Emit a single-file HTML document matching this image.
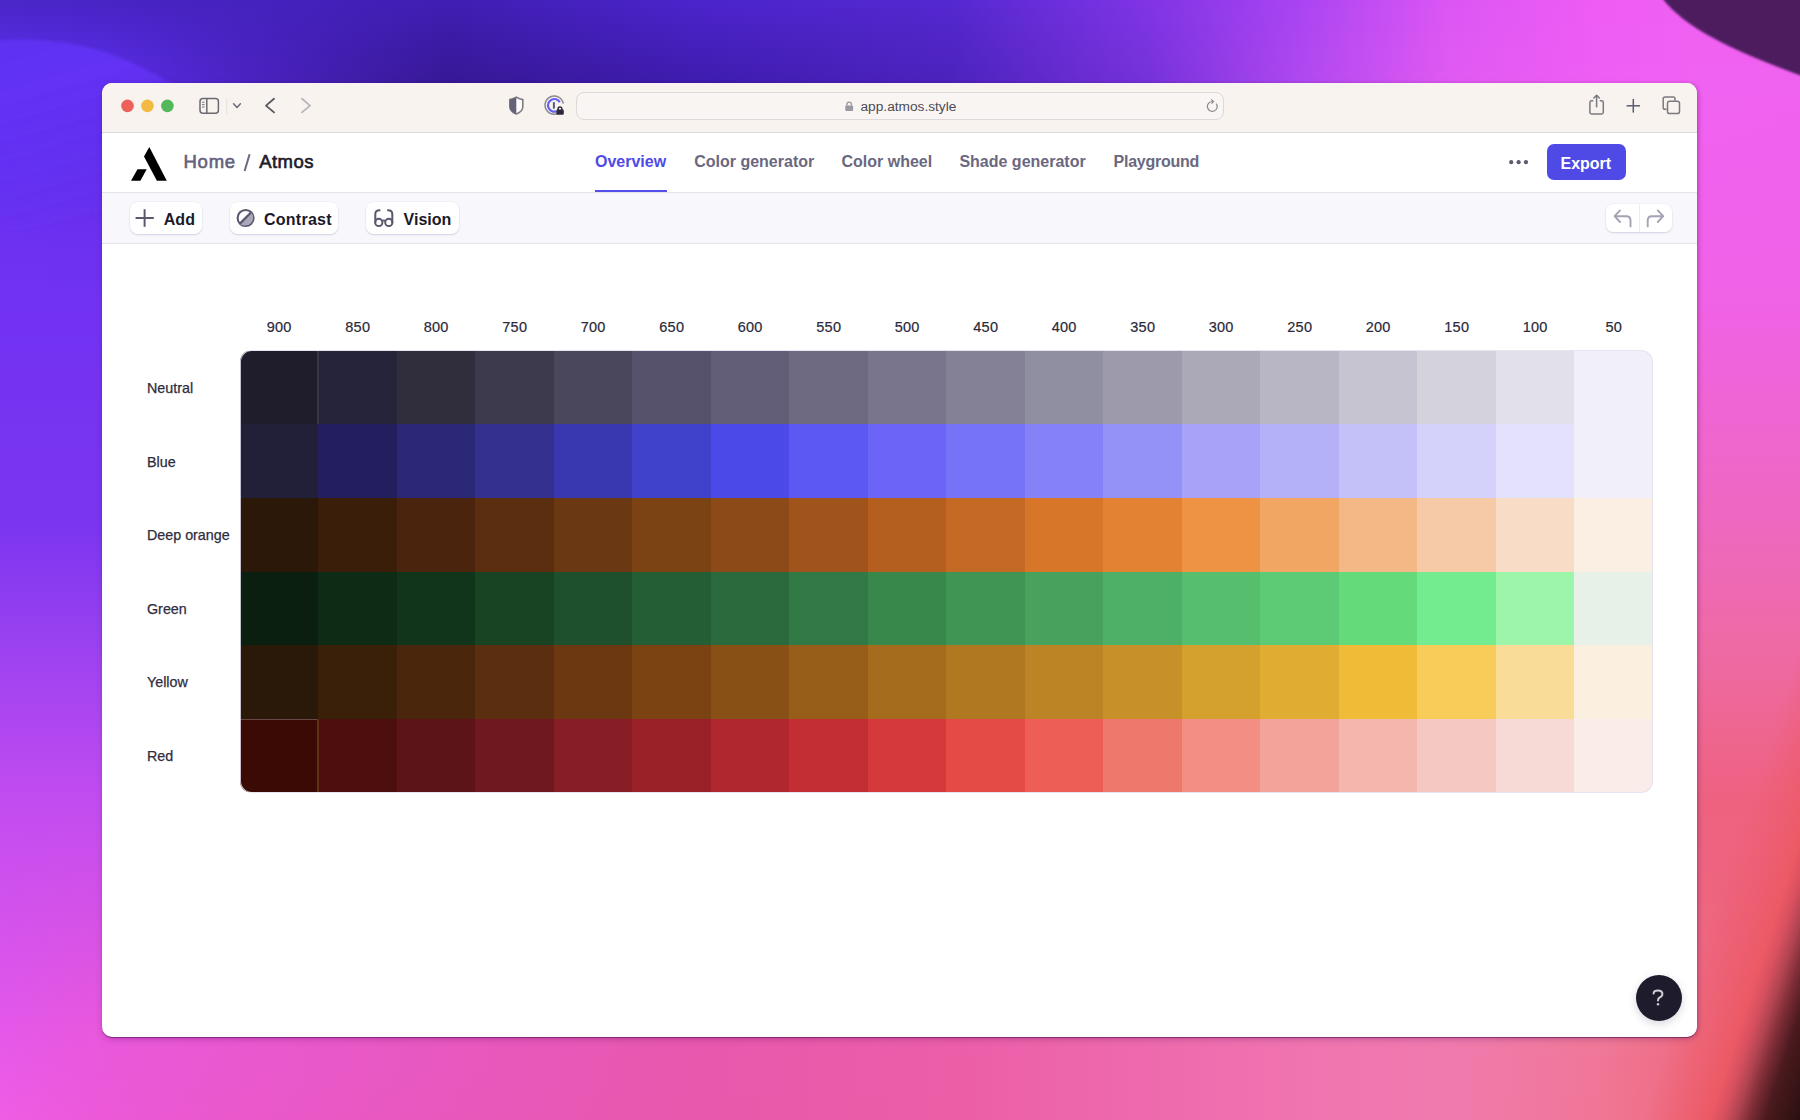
<!DOCTYPE html>
<html><head><meta charset="utf-8">
<style>
*{box-sizing:border-box;margin:0;padding:0}
html,body{width:1800px;height:1120px;overflow:hidden}
body{position:relative;font-family:"Liberation Sans",sans-serif;background:#b048f0}
.bg{position:absolute}
.win{position:absolute;left:102px;top:83px;width:1595px;height:954px;border-radius:10px;background:#fff;
 box-shadow:0 1px 0 rgba(80,10,80,.5),0 3px 7px -1px rgba(60,0,80,.25),2px 0 4px -1px rgba(90,0,90,.28)}
.winclip{position:absolute;left:102px;top:83px;width:1595px;height:954px;border-radius:10px;overflow:hidden}
.tb{position:absolute;left:0;top:0;width:1596px;height:50px;background:#f8f3ef;border-bottom:1px solid #d9d6d8}
.hd{position:absolute;left:0;top:50px;width:1596px;height:60px;background:#fff;border-bottom:1px solid #e3e3ed}
.tl{position:absolute;left:0;top:110px;width:1596px;height:51px;background:#f7f7fc;border-bottom:1px solid #e3e3ed}
.t{position:absolute;white-space:nowrap}
svg{position:absolute;overflow:visible}
.url{position:absolute;left:576px;top:92px;width:648px;height:28px;border:1px solid #dcd8dc;border-radius:8px;background:#f9f5f2}
.nav{position:absolute;top:154px;font-size:16px;line-height:16px;font-weight:700;color:#6a6880;white-space:nowrap}
.btn{position:absolute;background:#fff;border-radius:8px;box-shadow:0 0 0 0.5px rgba(225,225,240,.45),0 1px 1.5px rgba(195,195,222,.75)}
.btxt{position:absolute;font-size:16px;line-height:16px;font-weight:700;color:#1b1a29;white-space:nowrap}
.grid{position:absolute;left:240px;top:350px;width:1413px;height:443px;border-radius:12px;overflow:hidden;background:#fff}
.ring{position:absolute;left:240px;top:350px;width:1413px;height:443px;border-radius:12px;box-shadow:inset 0 0 0 1px rgba(226,224,238,.85)}
.c{position:absolute}
.cl{position:absolute;top:320px;width:80px;text-align:center;font-size:14.5px;line-height:14.5px;letter-spacing:.3px;color:#2b2a3a;-webkit-text-stroke:0.2px #2b2a3a}
.rl{position:absolute;left:147px;font-size:14.3px;line-height:14.3px;color:#2e2c3e;-webkit-text-stroke:0.25px #2e2c3e;white-space:nowrap}
</style></head>
<body>
<div id="bgwrap" style="position:absolute;left:0;top:0;width:1800px;height:1120px;overflow:hidden">
<div style="position:absolute;left:0;top:0px;width:1800px;height:8px;background:linear-gradient(90deg,#4b26ca 0px,#4924c6 100px,#4522be 250px,#3f1eb2 450px,#4b24cb 700px,#5428cf 950px,#8034e5 1150px,#aa44f2 1300px,#dc56f4 1450px,#ee5cf4 1600px,#f060f2 1700px,#f060f2 1800px)"></div>
<div style="position:absolute;left:0;top:8px;width:1800px;height:8px;background:linear-gradient(90deg,#4d27ce 0px,#4b25c9 100px,#4622be 250px,#3e1daf 450px,#4a23c8 700px,#5327cd 950px,#7f34e4 1150px,#ab45f2 1300px,#dd57f4 1450px,#ee5cf4 1600px,#f060f2 1700px,#f060f2 1800px)"></div>
<div style="position:absolute;left:0;top:16px;width:1800px;height:8px;background:linear-gradient(90deg,#4f28d2 0px,#4c26cd 100px,#4622be 250px,#3d1dac 450px,#4922c5 700px,#5227cb 950px,#7e34e3 1150px,#ab45f2 1300px,#dd57f4 1450px,#ee5cf4 1600px,#f060f2 1700px,#f060f2 1800px)"></div>
<div style="position:absolute;left:0;top:24px;width:1800px;height:8px;background:linear-gradient(90deg,#5129d5 0px,#4e27d0 100px,#4722bf 250px,#3c1ca9 450px,#4721c2 700px,#5126c9 950px,#7d33e2 1150px,#ac45f1 1300px,#dd57f3 1450px,#ee5df4 1600px,#f061f2 1700px,#f061f1 1800px)"></div>
<div style="position:absolute;left:0;top:32px;width:1800px;height:8px;background:linear-gradient(90deg,#532ad9 0px,#5028d4 100px,#4722bf 250px,#3b1ba6 450px,#4621bf 700px,#5125c7 950px,#7c33e1 1150px,#ad46f1 1300px,#de58f3 1450px,#ee5df4 1600px,#f061f2 1700px,#f061f1 1800px)"></div>
<div style="position:absolute;left:0;top:40px;width:1800px;height:8px;background:linear-gradient(90deg,#552bdd 0px,#5229d7 100px,#4822bf 250px,#3a1ba3 450px,#4520bc 700px,#5025c5 950px,#7b33e0 1150px,#ad46f1 1300px,#de58f3 1450px,#ee5df4 1600px,#f061f2 1700px,#f061f1 1800px)"></div>
<div style="position:absolute;left:0;top:48px;width:1800px;height:8px;background:linear-gradient(90deg,#572ce1 0px,#532adb 100px,#4822bf 250px,#391aa0 450px,#431fb9 700px,#4f24c3 950px,#7a33de 1150px,#ae47f1 1300px,#df59f3 1450px,#ee5df4 1600px,#f061f2 1700px,#f061f1 1800px)"></div>
<div style="position:absolute;left:0;top:56px;width:1800px;height:8px;background:linear-gradient(90deg,#582de5 0px,#552bde 100px,#4922bf 250px,#381a9d 450px,#421eb6 700px,#4e24c2 950px,#7933dd 1150px,#ae47f1 1300px,#df59f3 1450px,#ee5df4 1600px,#f061f2 1700px,#f061f1 1800px)"></div>
<div style="position:absolute;left:0;top:64px;width:1800px;height:8px;background:linear-gradient(90deg,#5a2de9 0px,#572be1 100px,#4922c0 250px,#38199a 450px,#411db3 700px,#4d23c0 950px,#7832dc 1150px,#af47f0 1300px,#df59f2 1450px,#ee5ef4 1600px,#f062f2 1700px,#f062f0 1800px)"></div>
<div style="position:absolute;left:0;top:72px;width:1800px;height:8px;background:linear-gradient(90deg,#5c2eed 0px,#582ce5 100px,#4a22c0 250px,#371997 450px,#3f1db1 700px,#4d23be 950px,#7732db 1150px,#af48f0 1300px,#e05af2 1450px,#ee5ef4 1600px,#f062f2 1700px,#f062f0 1800px)"></div>
<div style="position:absolute;left:0;top:80px;width:1800px;height:8px;background:linear-gradient(90deg,#5e2ff0 0px,#5a2de8 100px,#4a22c0 250px,#361894 450px,#3e1cae 700px,#4c22bc 950px,#7632da 1150px,#b048f0 1300px,#e05af2 1450px,#ee5ef4 1600px,#f062f2 1700px,#f062f0 1800px)"></div>
<div style="position:absolute;left:0;top:88px;width:1800px;height:8px;background:linear-gradient(90deg,#5f2ff0 0px,#5b2de8 100px,#4c23c2 250px,#3a1a98 450px,#421eb1 700px,#5024be 950px,#7933db 1150px,#b149f0 1300px,#e05af2 1450px,#ee5ef3 1600px,#f062f2 1700px,#f062f0 1800px)"></div>
<div style="position:absolute;left:0;top:96px;width:1800px;height:8px;background:linear-gradient(90deg,#602ff0 0px,#5c2de9 100px,#4e24c4 250px,#3d1b9b 450px,#461fb3 700px,#5425c0 950px,#7c34db 1150px,#b349ef 1300px,#e05af1 1450px,#ee5ef3 1600px,#f062f1 1700px,#f062ef 1800px)"></div>
<div style="position:absolute;left:0;top:104px;width:1800px;height:8px;background:linear-gradient(90deg,#602ff0 0px,#5d2ee9 100px,#5024c6 250px,#401c9f 450px,#4921b5 700px,#5827c1 950px,#7f36dc 1150px,#b44aef 1300px,#e05af1 1450px,#ed5ef2 1600px,#f062f1 1700px,#f062ef 1800px)"></div>
<div style="position:absolute;left:0;top:112px;width:1800px;height:8px;background:linear-gradient(90deg,#612ff0 0px,#5e2eea 100px,#5225c7 250px,#431ea2 450px,#4d22b8 700px,#5c28c3 950px,#8237dc 1150px,#b54aef 1300px,#e05af0 1450px,#ed5ef2 1600px,#f062f0 1700px,#f062ee 1800px)"></div>
<div style="position:absolute;left:0;top:120px;width:1800px;height:8px;background:linear-gradient(90deg,#6230f0 0px,#5f2eea 100px,#5426c9 250px,#461fa5 450px,#5124ba 700px,#602ac5 950px,#8538dd 1150px,#b64bef 1300px,#df5af0 1450px,#ed5ef1 1600px,#f062f0 1700px,#f062ee 1800px)"></div>
<div style="position:absolute;left:0;top:128px;width:1800px;height:8px;background:linear-gradient(90deg,#6330f0 0px,#5f2eea 100px,#5627cb 250px,#4a20a9 450px,#5425bc 700px,#642bc7 950px,#8839de 1150px,#b74bee 1300px,#df5af0 1450px,#ed5ef1 1600px,#f062ef 1700px,#f062ee 1800px)"></div>
<div style="position:absolute;left:0;top:136px;width:1800px;height:8px;background:linear-gradient(90deg,#6330f1 0px,#602eeb 100px,#5727cd 250px,#4d22ac 450px,#5826bf 700px,#682dc9 950px,#8b3ade 1150px,#b94cee 1300px,#df5aef 1450px,#ed5ef1 1600px,#f062ef 1700px,#f062ed 1800px)"></div>
<div style="position:absolute;left:0;top:144px;width:1800px;height:8px;background:linear-gradient(90deg,#6430f1 0px,#612eeb 100px,#5928cf 250px,#5023af 450px,#5c28c1 700px,#6b2eca 950px,#8e3bdf 1150px,#ba4cee 1300px,#df5aef 1450px,#ec5ef0 1600px,#f062ee 1700px,#f062ed 1800px)"></div>
<div style="position:absolute;left:0;top:152px;width:1800px;height:8px;background:linear-gradient(90deg,#6530f1 0px,#622feb 100px,#5b29d0 250px,#5324b3 450px,#5f29c3 700px,#6f30cc 950px,#913ddf 1150px,#bb4dee 1300px,#df5aef 1450px,#ec5ef0 1600px,#f062ee 1700px,#f062ed 1800px)"></div>
<div style="position:absolute;left:0;top:160px;width:1800px;height:8px;background:linear-gradient(90deg,#6530f1 0px,#632fec 100px,#5d2ad2 250px,#5726b6 450px,#632bc6 700px,#7331ce 950px,#933ee0 1150px,#bc4ded 1300px,#df5aee 1450px,#ec5eef 1600px,#f062ee 1700px,#f062ec 1800px)"></div>
<div style="position:absolute;left:0;top:168px;width:1800px;height:8px;background:linear-gradient(90deg,#6630f1 0px,#642fec 100px,#5f2ad4 250px,#5a27b9 450px,#672cc8 700px,#7733d0 950px,#963fe1 1150px,#bd4eed 1300px,#df5aee 1450px,#ec5fef 1600px,#f062ed 1700px,#f062ec 1800px)"></div>
<div style="position:absolute;left:0;top:176px;width:1800px;height:8px;background:linear-gradient(90deg,#6730f1 0px,#652fec 100px,#612bd6 250px,#5d28bd 450px,#6a2eca 700px,#7b35d1 950px,#9940e1 1150px,#bf4eed 1300px,#df5aed 1450px,#ec5fee 1600px,#f062ed 1700px,#f062ec 1800px)"></div>
<div style="position:absolute;left:0;top:184px;width:1800px;height:8px;background:linear-gradient(90deg,#6830f1 0px,#662fed 100px,#632cd8 250px,#602ac0 450px,#6e2fcd 700px,#7f36d3 950px,#9c41e2 1150px,#c04fed 1300px,#de5aed 1450px,#eb5fee 1600px,#f062ec 1700px,#f062eb 1800px)"></div>
<div style="position:absolute;left:0;top:192px;width:1800px;height:8px;background:linear-gradient(90deg,#6831f1 0px,#6630ed 100px,#652dd9 250px,#632bc4 450px,#7231cf 700px,#8338d5 950px,#9f42e2 1150px,#c14fec 1300px,#de5aed 1450px,#eb5fed 1600px,#f062ec 1700px,#f062eb 1800px)"></div>
<div style="position:absolute;left:0;top:200px;width:1800px;height:8px;background:linear-gradient(90deg,#6931f1 0px,#6730ee 100px,#672ddb 250px,#672cc7 450px,#7532d1 700px,#8739d7 950px,#a244e3 1150px,#c250ec 1300px,#de5aec 1450px,#eb5fed 1600px,#f062eb 1700px,#f062ea 1800px)"></div>
<div style="position:absolute;left:0;top:208px;width:1800px;height:8px;background:linear-gradient(90deg,#6a31f1 0px,#6830ee 100px,#682edd 250px,#6a2eca 450px,#7934d4 700px,#8a3bd8 950px,#a545e4 1150px,#c450ec 1300px,#de5aec 1450px,#eb5fec 1600px,#f062eb 1700px,#f062ea 1800px)"></div>
<div style="position:absolute;left:0;top:216px;width:1800px;height:8px;background:linear-gradient(90deg,#6b31f1 0px,#6930ee 100px,#6a2fdf 250px,#6d2fce 450px,#7d35d6 700px,#8e3cda 950px,#a846e4 1150px,#c551ec 1300px,#de5aec 1450px,#eb5fec 1600px,#f062ea 1700px,#f062ea 1800px)"></div>
<div style="position:absolute;left:0;top:224px;width:1800px;height:8px;background:linear-gradient(90deg,#6b31f1 0px,#6a30ef 100px,#6c30e1 250px,#7030d1 450px,#8037d8 700px,#923edc 950px,#ab47e5 1150px,#c651eb 1300px,#de5aeb 1450px,#eb5feb 1600px,#f062ea 1700px,#f062e9 1800px)"></div>
<div style="position:absolute;left:0;top:232px;width:1800px;height:8px;background:linear-gradient(90deg,#6c31f1 0px,#6b31ef 100px,#6e30e3 250px,#7332d4 450px,#8438db 700px,#963fde 950px,#ae48e5 1150px,#c752eb 1300px,#de5aeb 1450px,#ea5feb 1600px,#f062ea 1700px,#f062e9 1800px)"></div>
<div style="position:absolute;left:0;top:240px;width:1800px;height:8px;background:linear-gradient(90deg,#6d31f1 0px,#6c31ef 100px,#7031e4 250px,#7733d8 450px,#873add 700px,#9a41df 950px,#b149e6 1150px,#c852eb 1300px,#de5bea 1450px,#ea5fea 1600px,#f062e9 1700px,#f062e9 1800px)"></div>
<div style="position:absolute;left:0;top:248px;width:1800px;height:8px;background:linear-gradient(90deg,#6e31f2 0px,#6d31f0 100px,#7232e6 250px,#7a34db 450px,#8b3bdf 700px,#9e42e1 950px,#b34be7 1150px,#ca53eb 1300px,#de5bea 1450px,#ea5fea 1600px,#f062e9 1700px,#f062e8 1800px)"></div>
<div style="position:absolute;left:0;top:256px;width:1800px;height:8px;background:linear-gradient(90deg,#6e31f2 0px,#6e31f0 100px,#7433e8 250px,#7d36df 450px,#8f3de2 700px,#a244e3 950px,#b64ce7 1150px,#cb54ea 1300px,#dd5bea 1450px,#ea5fe9 1600px,#f062e8 1700px,#f062e8 1800px)"></div>
<div style="position:absolute;left:0;top:264px;width:1800px;height:8px;background:linear-gradient(90deg,#6f32f2 0px,#6e31f1 100px,#7633ea 250px,#8037e2 450px,#923ee4 700px,#a645e5 950px,#b94de8 1150px,#cc54ea 1300px,#dd5be9 1450px,#ea5fe9 1600px,#f062e8 1700px,#f062e7 1800px)"></div>
<div style="position:absolute;left:0;top:272px;width:1800px;height:8px;background:linear-gradient(90deg,#7032f2 0px,#6f31f1 100px,#7834ec 250px,#8338e5 450px,#9640e6 700px,#a947e6 950px,#bc4ee8 1150px,#cd55ea 1300px,#dd5be9 1450px,#e95fe8 1600px,#f062e7 1700px,#f062e7 1800px)"></div>
<div style="position:absolute;left:0;top:280px;width:1800px;height:8px;background:linear-gradient(90deg,#7132f2 0px,#7032f1 100px,#7935ed 250px,#873ae9 450px,#9a41e9 700px,#ad48e8 950px,#bf4fe9 1150px,#ce55e9 1300px,#dd5be9 1450px,#e95fe8 1600px,#f062e7 1700px,#f062e7 1800px)"></div>
<div style="position:absolute;left:0;top:288px;width:1800px;height:8px;background:linear-gradient(90deg,#7132f2 0px,#7132f2 100px,#7b36ef 250px,#8a3bec 450px,#9d42eb 700px,#b14aea 950px,#c250ea 1150px,#d056e9 1300px,#dd5be8 1450px,#e95fe7 1600px,#f062e6 1700px,#f062e6 1800px)"></div>
<div style="position:absolute;left:0;top:296px;width:1800px;height:8px;background:linear-gradient(90deg,#7232f2 0px,#7232f2 100px,#7d36f1 250px,#8d3cef 450px,#a144ee 700px,#b54cec 950px,#c552ea 1150px,#d156e9 1300px,#dd5be8 1450px,#e95fe7 1600px,#f062e6 1700px,#f062e6 1800px)"></div>
<div style="position:absolute;left:0;top:304px;width:1800px;height:8px;background:linear-gradient(90deg,#7232f2 0px,#7232f2 100px,#7d36f1 250px,#8d3cef 450px,#a144ed 700px,#b54ceb 950px,#c552e9 1150px,#d156e8 1300px,#dd5be7 1450px,#e95fe5 1600px,#f062e5 1700px,#f062e5 1800px)"></div>
<div style="position:absolute;left:0;top:312px;width:1800px;height:8px;background:linear-gradient(90deg,#7332f2 0px,#7332f2 100px,#7e36f1 250px,#8e3def 450px,#a144ec 700px,#b54cea 950px,#c552e8 1150px,#d157e7 1300px,#dd5be5 1450px,#e960e4 1600px,#f062e3 1700px,#f062e3 1800px)"></div>
<div style="position:absolute;left:0;top:320px;width:1800px;height:8px;background:linear-gradient(90deg,#7332f2 0px,#7332f2 100px,#7e37f0 250px,#8e3dee 450px,#a244ec 700px,#b54ce9 950px,#c552e7 1150px,#d157e6 1300px,#dd5be4 1450px,#e960e3 1600px,#f063e2 1700px,#f063e2 1800px)"></div>
<div style="position:absolute;left:0;top:328px;width:1800px;height:8px;background:linear-gradient(90deg,#7332f2 0px,#7332f2 100px,#7e37f0 250px,#8e3dee 450px,#a245eb 700px,#b54ce9 950px,#c552e6 1150px,#d157e5 1300px,#dd5ce3 1450px,#e960e1 1600px,#f063e0 1700px,#f063e0 1800px)"></div>
<div style="position:absolute;left:0;top:336px;width:1800px;height:8px;background:linear-gradient(90deg,#7333f2 0px,#7333f2 100px,#7e37f0 250px,#8e3dee 450px,#a245eb 700px,#b54ce8 950px,#c552e5 1150px,#d157e4 1300px,#dd5ce2 1450px,#e960e0 1600px,#f063df 1700px,#f063df 1800px)"></div>
<div style="position:absolute;left:0;top:344px;width:1800px;height:8px;background:linear-gradient(90deg,#7433f2 0px,#7433f2 100px,#7f37f0 250px,#8e3ded 450px,#a245ea 700px,#b64de7 950px,#c553e4 1150px,#d157e3 1300px,#dd5ce1 1450px,#e961df 1600px,#f063de 1700px,#f063de 1800px)"></div>
<div style="position:absolute;left:0;top:352px;width:1800px;height:8px;background:linear-gradient(90deg,#7433f1 0px,#7433f1 100px,#7f37f0 250px,#8f3ded 450px,#a245ea 700px,#b64de6 950px,#c553e4 1150px,#d157e2 1300px,#dd5ce0 1450px,#e861de 1600px,#ef64dc 1700px,#ef64dc 1800px)"></div>
<div style="position:absolute;left:0;top:360px;width:1800px;height:8px;background:linear-gradient(90deg,#7433f1 0px,#7433f1 100px,#7f37ef 250px,#8f3ded 450px,#a245e9 700px,#b64de5 950px,#c553e3 1150px,#d158e0 1300px,#dd5cde 1450px,#e861dc 1600px,#ef64db 1700px,#ef64db 1800px)"></div>
<div style="position:absolute;left:0;top:368px;width:1800px;height:8px;background:linear-gradient(90deg,#7533f1 0px,#7533f1 100px,#7f37ef 250px,#8f3eec 450px,#a245e8 700px,#b64de5 950px,#c553e2 1150px,#d158df 1300px,#dd5ddd 1450px,#e861db 1600px,#ef64da 1700px,#ef64da 1800px)"></div>
<div style="position:absolute;left:0;top:376px;width:1800px;height:8px;background:linear-gradient(90deg,#7533f1 0px,#7533f1 100px,#8037ef 250px,#8f3eec 450px,#a345e8 700px,#b64de4 950px,#c553e1 1150px,#d158de 1300px,#dd5ddc 1450px,#e861da 1600px,#ef64d8 1700px,#ef64d8 1800px)"></div>
<div style="position:absolute;left:0;top:384px;width:1800px;height:8px;background:linear-gradient(90deg,#7533f1 0px,#7533f1 100px,#8038ef 250px,#8f3eec 450px,#a346e7 700px,#b64de3 950px,#c654e0 1150px,#d158dd 1300px,#dd5ddb 1450px,#e862d8 1600px,#ef64d7 1700px,#ef64d7 1800px)"></div>
<div style="position:absolute;left:0;top:392px;width:1800px;height:8px;background:linear-gradient(90deg,#7533f1 0px,#7533f1 100px,#8038ef 250px,#903eeb 450px,#a346e7 700px,#b64ee2 950px,#c654df 1150px,#d158dc 1300px,#dd5dda 1450px,#e862d7 1600px,#ef65d5 1700px,#ef65d5 1800px)"></div>
<div style="position:absolute;left:0;top:400px;width:1800px;height:8px;background:linear-gradient(90deg,#7633f1 0px,#7633f1 100px,#8138ee 250px,#903eeb 450px,#a346e6 700px,#b64ee2 950px,#c654de 1150px,#d159db 1300px,#dd5dd8 1450px,#e862d6 1600px,#ef65d4 1700px,#ef65d4 1800px)"></div>
<div style="position:absolute;left:0;top:408px;width:1800px;height:8px;background:linear-gradient(90deg,#7634f1 0px,#7634f1 100px,#8138ee 250px,#903eea 450px,#a346e6 700px,#b64ee1 950px,#c654dd 1150px,#d159da 1300px,#dd5ed7 1450px,#e862d4 1600px,#ef65d3 1700px,#ef65d3 1800px)"></div>
<div style="position:absolute;left:0;top:416px;width:1800px;height:8px;background:linear-gradient(90deg,#7634f1 0px,#7634f1 100px,#8138ee 250px,#903eea 450px,#a346e5 700px,#b64ee0 950px,#c654dc 1150px,#d159d9 1300px,#dd5ed6 1450px,#e862d3 1600px,#ef65d1 1700px,#ef65d1 1800px)"></div>
<div style="position:absolute;left:0;top:424px;width:1800px;height:8px;background:linear-gradient(90deg,#7734f1 0px,#7734f1 100px,#8138ee 250px,#913eea 450px,#a446e5 700px,#b74edf 950px,#c654db 1150px,#d159d8 1300px,#dd5ed5 1450px,#e863d2 1600px,#ef65d0 1700px,#ef65d0 1800px)"></div>
<div style="position:absolute;left:0;top:432px;width:1800px;height:8px;background:linear-gradient(90deg,#7734f1 0px,#7734f1 100px,#8238ee 250px,#913fe9 450px,#a446e4 700px,#b74edf 950px,#c655da 1150px,#d159d7 1300px,#dd5ed4 1450px,#e863d0 1600px,#ef66cf 1700px,#ef66cf 1800px)"></div>
<div style="position:absolute;left:0;top:440px;width:1800px;height:8px;background:linear-gradient(90deg,#7734f1 0px,#7734f1 100px,#8238ee 250px,#913fe9 450px,#a447e3 700px,#b74fde 950px,#c655d9 1150px,#d15ad6 1300px,#dd5ed3 1450px,#e863cf 1600px,#ef66cd 1700px,#ef66cd 1800px)"></div>
<div style="position:absolute;left:0;top:448px;width:1800px;height:8px;background:linear-gradient(90deg,#7834f1 0px,#7834f1 100px,#8239ed 250px,#913fe9 450px,#a447e3 700px,#b74fdd 950px,#c655d8 1150px,#d15ad5 1300px,#dd5fd1 1450px,#e863ce 1600px,#ef66cc 1700px,#ef66cc 1800px)"></div>
<div style="position:absolute;left:0;top:456px;width:1800px;height:8px;background:linear-gradient(90deg,#7834f1 0px,#7834f1 100px,#8239ed 250px,#913fe8 450px,#a447e2 700px,#b74fdc 950px,#c655d7 1150px,#d15ad4 1300px,#dd5fd0 1450px,#e864cd 1600px,#ef66ca 1700px,#ef66ca 1800px)"></div>
<div style="position:absolute;left:0;top:464px;width:1800px;height:8px;background:linear-gradient(90deg,#7834f0 0px,#7834f0 100px,#8339ed 250px,#923fe8 450px,#a447e2 700px,#b74fdb 950px,#c655d6 1150px,#d15ad3 1300px,#dc5fcf 1450px,#e864cb 1600px,#ee67c9 1700px,#ee67c9 1800px)"></div>
<div style="position:absolute;left:0;top:472px;width:1800px;height:8px;background:linear-gradient(90deg,#7834f0 0px,#7834f0 100px,#8339ed 250px,#923fe8 450px,#a447e1 700px,#b74fdb 950px,#c656d6 1150px,#d15ad2 1300px,#dc5fce 1450px,#e864ca 1600px,#ee67c8 1700px,#ee67c8 1800px)"></div>
<div style="position:absolute;left:0;top:480px;width:1800px;height:8px;background:linear-gradient(90deg,#7935f0 0px,#7935f0 100px,#8339ed 250px,#923fe7 450px,#a547e1 700px,#b74fda 950px,#c656d5 1150px,#d15bd1 1300px,#dc5fcd 1450px,#e864c9 1600px,#ee67c6 1700px,#ee67c6 1800px)"></div>
<div style="position:absolute;left:0;top:488px;width:1800px;height:8px;background:linear-gradient(90deg,#7935f0 0px,#7935f0 100px,#8339ec 250px,#9240e7 450px,#a548e0 700px,#b750d9 950px,#c656d4 1150px,#d15bd0 1300px,#dc60cb 1450px,#e864c7 1600px,#ee67c5 1700px,#ee67c5 1800px)"></div>
<div style="position:absolute;left:0;top:496px;width:1800px;height:8px;background:linear-gradient(90deg,#7935f0 0px,#7935f0 100px,#8439ec 250px,#9240e7 450px,#a548df 700px,#b750d8 950px,#c656d3 1150px,#d15bce 1300px,#dc60ca 1450px,#e865c6 1600px,#ee67c3 1700px,#ee67c3 1800px)"></div>
<div style="position:absolute;left:0;top:504px;width:1800px;height:8px;background:linear-gradient(90deg,#7a35f0 0px,#7a35f0 100px,#8439ec 250px,#9340e6 450px,#a548df 700px,#b850d8 950px,#c656d2 1150px,#d15bcd 1300px,#dc60c9 1450px,#e765c5 1600px,#ee68c2 1700px,#ee68c2 1800px)"></div>
<div style="position:absolute;left:0;top:512px;width:1800px;height:8px;background:linear-gradient(90deg,#7a35f0 0px,#7a35f0 100px,#8439ec 250px,#9340e6 450px,#a548de 700px,#b850d7 950px,#c656d1 1150px,#d15bcc 1300px,#dc60c8 1450px,#e765c3 1600px,#ee68c1 1700px,#ee68c1 1800px)"></div>
<div style="position:absolute;left:0;top:520px;width:1800px;height:8px;background:linear-gradient(90deg,#7b35f0 0px,#7b35f0 100px,#853aec 250px,#9440e5 450px,#a648de 700px,#b850d6 950px,#c757d0 1150px,#d25ccb 1300px,#dd60c7 1450px,#e765c2 1600px,#ee68bf 1700px,#ee68bf 1800px)"></div>
<div style="position:absolute;left:0;top:528px;width:1800px;height:8px;background:linear-gradient(90deg,#7d36f0 0px,#7d36f0 100px,#873bec 250px,#9541e5 450px,#a749dd 700px,#b951d5 950px,#c757cf 1150px,#d25cca 1300px,#dd61c5 1450px,#e865c0 1600px,#ee68bd 1700px,#ee68bd 1800px)"></div>
<div style="position:absolute;left:0;top:536px;width:1800px;height:8px;background:linear-gradient(90deg,#7f37f0 0px,#7f37f0 100px,#893beb 250px,#9742e5 450px,#a949dc 700px,#ba51d4 950px,#c857ce 1150px,#d35cc9 1300px,#dd61c4 1450px,#e865bf 1600px,#ee68bc 1700px,#ee68bc 1800px)"></div>
<div style="position:absolute;left:0;top:544px;width:1800px;height:8px;background:linear-gradient(90deg,#8138f0 0px,#8138f0 100px,#8b3ceb 250px,#9942e4 450px,#aa4adc 700px,#bb52d3 950px,#c958cc 1150px,#d35cc7 1300px,#dd61c2 1450px,#e866bd 1600px,#ee68ba 1700px,#ee68ba 1800px)"></div>
<div style="position:absolute;left:0;top:552px;width:1800px;height:8px;background:linear-gradient(90deg,#8339f0 0px,#8339f0 100px,#8d3deb 250px,#9a43e4 450px,#ab4bdb 700px,#bc52d2 950px,#ca58cb 1150px,#d45dc6 1300px,#de61c1 1450px,#e866bb 1600px,#ee69b8 1700px,#ee69b8 1800px)"></div>
<div style="position:absolute;left:0;top:560px;width:1800px;height:8px;background:linear-gradient(90deg,#8639f0 0px,#8639f0 100px,#8f3eeb 250px,#9c44e4 450px,#ad4bdb 700px,#bd53d1 950px,#ca59ca 1150px,#d45dc5 1300px,#de61bf 1450px,#e866ba 1600px,#ee69b7 1700px,#ee69b7 1800px)"></div>
<div style="position:absolute;left:0;top:568px;width:1800px;height:8px;background:linear-gradient(90deg,#883af0 0px,#883af0 100px,#913eeb 250px,#9e44e3 450px,#ae4cda 700px,#be53d1 950px,#cb59c9 1150px,#d55dc3 1300px,#de62be 1450px,#e866b8 1600px,#ee69b5 1700px,#ee69b5 1800px)"></div>
<div style="position:absolute;left:0;top:576px;width:1800px;height:8px;background:linear-gradient(90deg,#8a3bf0 0px,#8a3bf0 100px,#933feb 250px,#9f45e3 450px,#af4cd9 700px,#bf53d0 950px,#cc59c8 1150px,#d55ec2 1300px,#df62bc 1450px,#e866b7 1600px,#ee69b3 1700px,#ee69b3 1800px)"></div>
<div style="position:absolute;left:0;top:584px;width:1800px;height:8px;background:linear-gradient(90deg,#8c3cf0 0px,#8c3cf0 100px,#9440ea 250px,#a146e3 450px,#b04dd9 700px,#c054cf 950px,#cc5ac7 1150px,#d65ec1 1300px,#df62bb 1450px,#e866b5 1600px,#ee69b1 1700px,#ee69b1 1800px)"></div>
<div style="position:absolute;left:0;top:592px;width:1800px;height:8px;background:linear-gradient(90deg,#8e3df0 0px,#8e3df0 100px,#9641ea 250px,#a346e2 450px,#b24dd8 700px,#c154ce 950px,#cd5ac6 1150px,#d65ec0 1300px,#df62b9 1450px,#e967b3 1600px,#ee69b0 1700px,#ee69b0 1800px)"></div>
<div style="position:absolute;left:0;top:600px;width:1800px;height:8px;background:linear-gradient(90deg,#903df0 0px,#903df0 100px,#9841ea 250px,#a447e2 450px,#b34ed7 700px,#c255cd 950px,#ce5ac4 1150px,#d75ebe 1300px,#e063b8 1450px,#e967b2 1600px,#ee69ae 1700px,#ee69ae 1800px)"></div>
<div style="position:absolute;left:0;top:608px;width:1800px;height:8px;background:linear-gradient(90deg,#923ef0 0px,#923ef0 100px,#9a42ea 250px,#a647e1 450px,#b44ed7 700px,#c355cc 950px,#cf5bc3 1150px,#d75fbd 1300px,#e063b6 1450px,#e967b0 1600px,#ee69ac 1700px,#ee69ac 1800px)"></div>
<div style="position:absolute;left:0;top:616px;width:1800px;height:8px;background:linear-gradient(90deg,#943ff0 0px,#943ff0 100px,#9c43ea 250px,#a748e1 450px,#b64fd6 700px,#c456cb 950px,#cf5bc2 1150px,#d85fbc 1300px,#e063b5 1450px,#e967ae 1600px,#ee6aaa 1700px,#ee6aaa 1800px)"></div>
<div style="position:absolute;left:0;top:624px;width:1800px;height:8px;background:linear-gradient(90deg,#9640f0 0px,#9640f0 100px,#9e44ea 250px,#a949e1 450px,#b74fd5 700px,#c556ca 950px,#d05bc1 1150px,#d85fba 1300px,#e163b4 1450px,#e967ad 1600px,#ee6aa9 1700px,#ee6aa9 1800px)"></div>
<div style="position:absolute;left:0;top:632px;width:1800px;height:8px;background:linear-gradient(90deg,#9841f0 0px,#9841f0 100px,#a044ea 250px,#ab49e0 450px,#b850d5 700px,#c656c9 950px,#d15cc0 1150px,#d960b9 1300px,#e164b2 1450px,#e967ab 1600px,#ee6aa7 1700px,#ee6aa7 1800px)"></div>
<div style="position:absolute;left:0;top:640px;width:1800px;height:8px;background:linear-gradient(90deg,#9a41f0 0px,#9a41f0 100px,#a245e9 250px,#ac4ae0 450px,#ba51d4 700px,#c757c8 950px,#d15cbf 1150px,#d960b8 1300px,#e164b1 1450px,#e968aa 1600px,#ee6aa5 1700px,#ee6aa5 1800px)"></div>
<div style="position:absolute;left:0;top:648px;width:1800px;height:8px;background:linear-gradient(90deg,#9d42f0 0px,#9d42f0 100px,#a446e9 250px,#ae4be0 450px,#bb51d3 700px,#c857c7 950px,#d25cbe 1150px,#da60b6 1300px,#e264af 1450px,#e968a8 1600px,#ee6aa4 1700px,#ee6aa4 1800px)"></div>
<div style="position:absolute;left:0;top:656px;width:1800px;height:8px;background:linear-gradient(90deg,#9f43f0 0px,#9f43f0 100px,#a646e9 250px,#b04bdf 450px,#bc51d3 700px,#c957c6 950px,#d35cbc 1150px,#da60b5 1300px,#e264ae 1450px,#e967a6 1600px,#ee69a2 1700px,#ee69a2 1800px)"></div>
<div style="position:absolute;left:0;top:664px;width:1800px;height:8px;background:linear-gradient(90deg,#a143f0 0px,#a143f0 100px,#a747e9 250px,#b14bdf 450px,#bd51d2 700px,#ca57c5 950px,#d45cbb 1150px,#db60b4 1300px,#e263ac 1450px,#ea67a4 1600px,#ee69a0 1700px,#ee69a0 1800px)"></div>
<div style="position:absolute;left:0;top:672px;width:1800px;height:8px;background:linear-gradient(90deg,#a344f0 0px,#a344f0 100px,#a947e9 250px,#b34cde 450px,#bf52d1 700px,#cb57c4 950px,#d45cba 1150px,#db60b2 1300px,#e363aa 1450px,#ea67a2 1600px,#ee699e 1700px,#ee699e 1800px)"></div>
<div style="position:absolute;left:0;top:680px;width:1800px;height:8px;background:linear-gradient(90deg,#a544f0 0px,#a544f0 100px,#ab47e9 250px,#b44cde 450px,#c052d1 700px,#cc57c3 950px,#d55cb9 1150px,#dc5fb1 1300px,#e363a9 1450px,#ea66a1 1600px,#ee689c 1700px,#ee689c 1800px)"></div>
<div style="position:absolute;left:0;top:688px;width:1800px;height:8px;background:linear-gradient(90deg,#a745f0 0px,#a745f0 100px,#ad48e8 250px,#b64cdd 450px,#c152d0 700px,#cd57c2 950px,#d65cb7 1150px,#dc5faf 1300px,#e362a7 1450px,#ea669f 1600px,#ee689a 1700px,#ee689a 1800px)"></div>
<div style="position:absolute;left:0;top:696px;width:1800px;height:8px;background:linear-gradient(90deg,#a945f0 0px,#a945f0 100px,#af48e8 250px,#b84ddd 450px,#c352cf 700px,#ce57c1 950px,#d65cb6 1150px,#dd5fae 1300px,#e362a5 1450px,#ea659d 1600px,#ee6798 1700px,#ee6798 1800px)"></div>
<div style="position:absolute;left:0;top:704px;width:1800px;height:8px;background:linear-gradient(90deg,#ab46f0 0px,#ab46f0 100px,#b149e8 250px,#b94ddd 450px,#c452ce 700px,#ce57c0 950px,#d75cb5 1150px,#dd5fac 1300px,#e462a4 1450px,#ea659b 1600px,#ee6796 1700px,#ee6796 1800px)"></div>
<div style="position:absolute;left:0;top:712px;width:1800px;height:8px;background:linear-gradient(90deg,#ad46f0 0px,#ad46f0 100px,#b349e8 250px,#bb4ddc 450px,#c552ce 700px,#cf57bf 950px,#d85cb4 1150px,#de5fab 1300px,#e462a2 1450px,#ea6599 1600px,#ee6694 1700px,#ee6694 1800px)"></div>
<div style="position:absolute;left:0;top:720px;width:1800px;height:8px;background:linear-gradient(90deg,#af47f0 0px,#af47f0 100px,#b44ae8 250px,#bc4edc 450px,#c653cd 700px,#d057be 950px,#d85bb2 1150px,#de5ea9 1300px,#e461a0 1450px,#ea6498 1600px,#ee6692 1700px,#ee6692 1800px)"></div>
<div style="position:absolute;left:0;top:728px;width:1800px;height:8px;background:linear-gradient(90deg,#b147f0 0px,#b147f0 100px,#b64ae8 250px,#be4edb 450px,#c853cc 700px,#d158bd 950px,#d95bb1 1150px,#df5ea8 1300px,#e5619f 1450px,#eb6496 1600px,#ee6690 1700px,#ee6690 1800px)"></div>
<div style="position:absolute;left:0;top:736px;width:1800px;height:8px;background:linear-gradient(90deg,#b348f0 0px,#b348f0 100px,#b84be7 250px,#c04edb 450px,#c953cc 700px,#d258bc 950px,#da5bb0 1150px,#df5ea6 1300px,#e5619d 1450px,#eb6494 1600px,#ee658e 1700px,#ee658e 1800px)"></div>
<div style="position:absolute;left:0;top:744px;width:1800px;height:8px;background:linear-gradient(90deg,#b549f0 0px,#b549f0 100px,#ba4be7 250px,#c14fdb 450px,#ca53cb 700px,#d358bb 950px,#da5bae 1150px,#e05ea5 1300px,#e5609c 1450px,#eb6392 1600px,#ee658c 1700px,#ee658c 1800px)"></div>
<div style="position:absolute;left:0;top:752px;width:1800px;height:8px;background:linear-gradient(90deg,#b749f0 0px,#b749f0 100px,#bc4be7 250px,#c34fda 450px,#cb53ca 700px,#d458ba 950px,#db5bad 1150px,#e05ea4 1300px,#e6609a 1450px,#eb6390 1600px,#ee648b 1700px,#ee648b 1800px)"></div>
<div style="position:absolute;left:0;top:760px;width:1800px;height:8px;background:linear-gradient(90deg,#b94af0 0px,#b94af0 100px,#be4ce7 250px,#c44fda 450px,#cd53c9 700px,#d558b9 950px,#dc5bac 1150px,#e15da2 1300px,#e66098 1450px,#eb628f 1600px,#ee6489 1700px,#ee6489 1800px)"></div>
<div style="position:absolute;left:0;top:768px;width:1800px;height:8px;background:linear-gradient(90deg,#bb4af0 0px,#bb4af0 100px,#bf4ce7 250px,#c650d9 450px,#ce54c9 700px,#d658b8 950px,#dd5bab 1150px,#e15da1 1300px,#e66097 1450px,#eb628d 1600px,#ee6387 1700px,#ee6387 1800px)"></div>
<div style="position:absolute;left:0;top:776px;width:1800px;height:8px;background:linear-gradient(90deg,#bd4bf0 0px,#bd4bf0 100px,#c14de7 250px,#c750d9 450px,#cf54c8 700px,#d758b7 950px,#dd5ba9 1150px,#e25d9f 1300px,#e75f95 1450px,#eb628b 1600px,#ee6385 1700px,#ee6385 1800px)"></div>
<div style="position:absolute;left:0;top:784px;width:1800px;height:8px;background:linear-gradient(90deg,#bf4bf0 0px,#bf4bf0 100px,#c34de6 250px,#c950d9 450px,#d154c7 700px,#d858b6 950px,#de5ba8 1150px,#e25d9e 1300px,#e75f93 1450px,#eb6189 1600px,#ee6383 1700px,#ee6383 1800px)"></div>
<div style="position:absolute;left:0;top:792px;width:1800px;height:8px;background:linear-gradient(90deg,#c14cf0 0px,#c14cf0 100px,#c54ee6 250px,#cb51d8 450px,#d254c7 700px,#d958b5 950px,#df5ba7 1150px,#e35d9c 1300px,#e75f92 1450px,#eb6187 1600px,#ee6281 1700px,#ee6281 1800px)"></div>
<div style="position:absolute;left:0;top:800px;width:1800px;height:8px;background:linear-gradient(90deg,#c34cf0 0px,#c34cf0 100px,#c74ee6 250px,#cc51d7 450px,#d354c6 700px,#da58b4 950px,#df5ba6 1150px,#e35d9c 1300px,#e75f92 1450px,#ec6187 1600px,#ee6280 1700px,#ee6280 1800px)"></div>
<div style="position:absolute;left:0;top:808px;width:1800px;height:8px;background:linear-gradient(90deg,#c44df0 0px,#c44def 100px,#c84ee5 250px,#cd51d7 450px,#d454c5 700px,#da58b4 950px,#e05ba7 1150px,#e45e9d 1300px,#e86092 1450px,#ec6287 1600px,#ee6280 1700px,#ee627f 1800px)"></div>
<div style="position:absolute;left:0;top:816px;width:1800px;height:8px;background:linear-gradient(90deg,#c54def 0px,#c54dee 100px,#c94fe4 250px,#ce51d6 450px,#d455c4 700px,#db58b3 950px,#e05ca7 1150px,#e45f9d 1300px,#e86193 1450px,#ec6388 1600px,#ee6380 1700px,#ed627f 1800px)"></div>
<div style="position:absolute;left:0;top:824px;width:1800px;height:8px;background:linear-gradient(90deg,#c64def 0px,#c74dee 100px,#ca4fe3 250px,#cf52d5 450px,#d555c3 700px,#dc58b3 950px,#e15ca7 1150px,#e55f9e 1300px,#e86294 1450px,#ec6388 1600px,#ee6380 1700px,#ed627e 1800px)"></div>
<div style="position:absolute;left:0;top:832px;width:1800px;height:8px;background:linear-gradient(90deg,#c74eef 0px,#c84eed 100px,#cb4fe3 250px,#d052d4 450px,#d655c3 700px,#dc59b3 950px,#e15da7 1150px,#e5609f 1300px,#e96395 1450px,#ec6489 1600px,#ee6380 1700px,#ed627e 1800px)"></div>
<div style="position:absolute;left:0;top:840px;width:1800px;height:8px;background:linear-gradient(90deg,#c84eef 0px,#c94eec 100px,#cd50e2 250px,#d152d3 450px,#d655c2 700px,#dd59b2 950px,#e25da8 1150px,#e6619f 1300px,#e96496 1450px,#ec658a 1600px,#ee6380 1700px,#ed627d 1800px)"></div>
<div style="position:absolute;left:0;top:848px;width:1800px;height:8px;background:linear-gradient(90deg,#c94fef 0px,#cb4fec 100px,#ce50e1 250px,#d252d3 450px,#d755c1 700px,#dd59b2 950px,#e25ea8 1150px,#e662a0 1300px,#e96597 1450px,#ec668a 1600px,#ee6480 1700px,#ed627c 1800px)"></div>
<div style="position:absolute;left:0;top:856px;width:1800px;height:8px;background:linear-gradient(90deg,#cb4fee 0px,#cc4feb 100px,#cf50e0 250px,#d353d2 450px,#d855c0 700px,#de59b1 950px,#e35ea8 1150px,#e663a1 1300px,#ea6698 1450px,#ed678b 1600px,#ee6480 1700px,#ec617c 1800px)"></div>
<div style="position:absolute;left:0;top:864px;width:1800px;height:8px;background:linear-gradient(90deg,#cc4fee 0px,#cd4fea 100px,#d051e0 250px,#d453d1 450px,#d955bf 700px,#df5ab1 950px,#e35fa8 1150px,#e763a1 1300px,#ea6799 1450px,#ed678b 1600px,#ee6480 1700px,#ec617b 1800px)"></div>
<div style="position:absolute;left:0;top:872px;width:1800px;height:8px;background:linear-gradient(90deg,#cd50ee 0px,#cf50ea 100px,#d151df 250px,#d553d0 450px,#d955be 700px,#df5ab0 950px,#e45fa9 1150px,#e764a2 1300px,#ea679a 1450px,#ed688c 1600px,#ee6580 1700px,#ec617b 1800px)"></div>
<div style="position:absolute;left:0;top:880px;width:1800px;height:8px;background:linear-gradient(90deg,#ce50ee 0px,#d050e9 100px,#d352de 250px,#d653cf 450px,#da56be 700px,#e05ab0 950px,#e460a9 1150px,#e865a3 1300px,#ea689b 1450px,#ed698d 1600px,#ee6580 1700px,#ec617a 1800px)"></div>
<div style="position:absolute;left:0;top:888px;width:1800px;height:8px;background:linear-gradient(90deg,#cf51ee 0px,#d151e8 100px,#d452de 250px,#d754cf 450px,#db56bd 700px,#e15ab0 950px,#e561a9 1150px,#e866a4 1300px,#eb699c 1450px,#ed6a8d 1600px,#ee6580 1700px,#ec617a 1800px)"></div>
<div style="position:absolute;left:0;top:896px;width:1800px;height:8px;background:linear-gradient(90deg,#d051ed 0px,#d251e8 100px,#d552dd 250px,#d854ce 450px,#dc56bc 700px,#e15aaf 950px,#e561aa 1150px,#e966a4 1300px,#eb6a9d 1450px,#ed6b8e 1600px,#ee6580 1700px,#eb6179 1800px)"></div>
<div style="position:absolute;left:0;top:904px;width:1800px;height:8px;background:linear-gradient(90deg,#d151ed 0px,#d451e7 100px,#d653dc 250px,#d854cd 450px,#dc56bb 700px,#e25baf 950px,#e662aa 1150px,#e967a5 1300px,#eb6b9e 1450px,#ee6b8e 1600px,#ee6680 1700px,#eb6179 1800px)"></div>
<div style="position:absolute;left:0;top:912px;width:1800px;height:8px;background:linear-gradient(90deg,#d352ed 0px,#d552e6 100px,#d853db 250px,#d954cc 450px,#dd56ba 700px,#e25bae 950px,#e662aa 1150px,#e968a6 1300px,#ec6c9f 1450px,#ee6c8f 1600px,#ee6680 1700px,#eb6178 1800px)"></div>
<div style="position:absolute;left:0;top:920px;width:1800px;height:8px;background:linear-gradient(90deg,#d452ed 0px,#d652e6 100px,#d953db 250px,#da55cb 450px,#de56ba 700px,#e35bae 950px,#e763aa 1150px,#ea69a6 1300px,#ec6da0 1450px,#ee6d90 1600px,#ee6680 1700px,#eb6178 1800px)"></div>
<div style="position:absolute;left:0;top:928px;width:1800px;height:8px;background:linear-gradient(90deg,#d553ed 0px,#d853e5 100px,#da54da 250px,#db55cb 450px,#de56b9 700px,#e45bae 950px,#e763ab 1150px,#ea6aa7 1300px,#ec6ea1 1450px,#ee6e90 1600px,#ee6680 1700px,#eb6177 1800px)"></div>
<div style="position:absolute;left:0;top:936px;width:1800px;height:8px;background:linear-gradient(90deg,#d653ec 0px,#d953e4 100px,#db54d9 250px,#dc55ca 450px,#df56b8 700px,#e45bad 950px,#e864ab 1150px,#eb6aa8 1300px,#ec6fa2 1450px,#ee6e91 1600px,#ee6780 1700px,#ea6177 1800px)"></div>
<div style="position:absolute;left:0;top:944px;width:1800px;height:8px;background:linear-gradient(90deg,#d753ec 0px,#da53e4 100px,#dc54d8 250px,#dd55c9 450px,#e057b7 700px,#e55cad 950px,#e864ab 1150px,#eb6ba8 1300px,#ed70a3 1450px,#ee6f91 1600px,#ee6780 1700px,#ea6176 1800px)"></div>
<div style="position:absolute;left:0;top:952px;width:1800px;height:8px;background:linear-gradient(90deg,#d854ec 0px,#dc54e3 100px,#de55d8 250px,#de56c8 450px,#e157b6 700px,#e65cac 950px,#e965ab 1150px,#ec6ca9 1300px,#ed71a4 1450px,#ee7092 1600px,#ee6780 1700px,#ea6175 1800px)"></div>
<div style="position:absolute;left:0;top:960px;width:1800px;height:8px;background:linear-gradient(90deg,#da54ec 0px,#dd54e2 100px,#df55d7 250px,#df56c7 450px,#e157b5 700px,#e65cac 950px,#e965ac 1150px,#ec6daa 1300px,#ed72a5 1450px,#ef7193 1600px,#ee6880 1700px,#ea6175 1800px)"></div>
<div style="position:absolute;left:0;top:968px;width:1800px;height:8px;background:linear-gradient(90deg,#db55ec 0px,#de55e1 100px,#e055d6 250px,#e056c7 450px,#e257b5 700px,#e75cab 950px,#ea66ac 1150px,#ec6eaa 1300px,#ee73a6 1450px,#ef7293 1600px,#ee6880 1700px,#ea6174 1800px)"></div>
<div style="position:absolute;left:0;top:976px;width:1800px;height:8px;background:linear-gradient(90deg,#dc55eb 0px,#e055e1 100px,#e156d5 250px,#e156c6 450px,#e357b4 700px,#e85cab 950px,#ea66ac 1150px,#ed6eab 1300px,#ee73a7 1450px,#ef7294 1600px,#ee6880 1700px,#e96074 1800px)"></div>
<div style="position:absolute;left:0;top:984px;width:1800px;height:8px;background:linear-gradient(90deg,#dd56eb 0px,#e156e0 100px,#e356d5 250px,#e256c5 450px,#e457b3 700px,#e85dab 950px,#eb67ac 1150px,#ed6fac 1300px,#ee74a8 1450px,#ef7394 1600px,#ee6880 1700px,#e96073 1800px)"></div>
<div style="position:absolute;left:0;top:992px;width:1800px;height:8px;background:linear-gradient(90deg,#de56eb 0px,#e256df 100px,#e456d4 250px,#e357c4 450px,#e457b2 700px,#e95daa 950px,#eb67ad 1150px,#ee70ac 1300px,#ee75a9 1450px,#ef7495 1600px,#ee6980 1700px,#e96073 1800px)"></div>
<div style="position:absolute;left:0;top:1000px;width:1800px;height:8px;background:linear-gradient(90deg,#df56eb 0px,#e456df 100px,#e557d3 250px,#e457c3 450px,#e557b1 700px,#e95daa 950px,#ec68ad 1150px,#ee71ad 1300px,#ef76aa 1450px,#ef7596 1600px,#ee6980 1700px,#e96072 1800px)"></div>
<div style="position:absolute;left:0;top:1008px;width:1800px;height:8px;background:linear-gradient(90deg,#e057eb 0px,#e557de 100px,#e657d2 250px,#e557c3 450px,#e658b1 700px,#ea5da9 950px,#ec68ad 1150px,#ef72ae 1300px,#ef77ab 1450px,#f07696 1600px,#ee6980 1700px,#e96072 1800px)"></div>
<div style="position:absolute;left:0;top:1016px;width:1800px;height:8px;background:linear-gradient(90deg,#e257ea 0px,#e657dd 100px,#e757d2 250px,#e657c2 450px,#e658b0 700px,#eb5ea9 950px,#ed69ad 1150px,#ef72af 1300px,#ef78ac 1450px,#f07697 1600px,#ee6980 1700px,#e86071 1800px)"></div>
<div style="position:absolute;left:0;top:1024px;width:1800px;height:8px;background:linear-gradient(90deg,#e358ea 0px,#e858dd 100px,#e958d1 250px,#e758c1 450px,#e758af 700px,#eb5ea8 950px,#ed69ae 1150px,#f073af 1300px,#f079ad 1450px,#f07797 1600px,#ee6a80 1700px,#e86071 1800px)"></div>
<div style="position:absolute;left:0;top:1032px;width:1800px;height:8px;background:linear-gradient(90deg,#e458ea 0px,#e958dc 100px,#ea58d0 250px,#e858c0 450px,#e858ae 700px,#ec5ea8 950px,#ee6aae 1150px,#f074b0 1300px,#f07aae 1450px,#f07898 1600px,#ee6a80 1700px,#e86070 1800px)"></div>
<div style="position:absolute;left:0;top:1040px;width:1800px;height:8px;background:linear-gradient(90deg,#e558e9 0px,#e958dc 100px,#ea58cf 250px,#e858c0 450px,#e858ae 700px,#ec5ea8 950px,#ee6aae 1150px,#f074b0 1300px,#f07aae 1450px,#f07898 1600px,#ee6a80 1700px,#e86070 1800px)"></div>
<div style="position:absolute;left:0;top:1048px;width:1800px;height:8px;background:linear-gradient(90deg,#e659e9 0px,#ea58db 100px,#ea58cf 250px,#e858bf 450px,#e858ae 700px,#ec5ea8 950px,#ee6aae 1150px,#f074b0 1300px,#f07aae 1450px,#f07898 1600px,#ee6a7f 1700px,#e86070 1800px)"></div>
<div style="position:absolute;left:0;top:1056px;width:1800px;height:8px;background:linear-gradient(90deg,#e759e8 0px,#ea58db 100px,#ea58ce 250px,#e858bf 450px,#e858ad 700px,#ec5ea7 950px,#ee6aae 1150px,#f074b0 1300px,#f07aae 1450px,#f07797 1600px,#ee6a7f 1700px,#e86070 1800px)"></div>
<div style="position:absolute;left:0;top:1064px;width:1800px;height:8px;background:linear-gradient(90deg,#e85ae8 0px,#ea58db 100px,#ea58ce 250px,#e858bf 450px,#e858ad 700px,#ec5ea7 950px,#ee6aae 1150px,#f074b0 1300px,#f07aae 1450px,#f07797 1600px,#ee6a7f 1700px,#e86070 1800px)"></div>
<div style="position:absolute;left:0;top:1072px;width:1800px;height:8px;background:linear-gradient(90deg,#e95ae7 0px,#ea58da 100px,#ea58cd 250px,#e858be 450px,#e858ad 700px,#ec5ea7 950px,#ee6aae 1150px,#f074b0 1300px,#f07aae 1450px,#f07797 1600px,#ee6a7e 1700px,#e86070 1800px)"></div>
<div style="position:absolute;left:0;top:1080px;width:1800px;height:8px;background:linear-gradient(90deg,#ea5be7 0px,#eb58da 100px,#ea58cd 250px,#e858be 450px,#e858ad 700px,#ec5ea7 950px,#ee6aae 1150px,#f074b0 1300px,#f07aae 1450px,#f07797 1600px,#ee6a7e 1700px,#e86070 1800px)"></div>
<div style="position:absolute;left:0;top:1088px;width:1800px;height:8px;background:linear-gradient(90deg,#eb5be6 0px,#eb58d9 100px,#ea58cc 250px,#e858bd 450px,#e858ad 700px,#ec5ea7 950px,#ee6aae 1150px,#f074b0 1300px,#f07aae 1450px,#f07797 1600px,#ee6a7d 1700px,#e86070 1800px)"></div>
<div style="position:absolute;left:0;top:1096px;width:1800px;height:8px;background:linear-gradient(90deg,#ec5ce5 0px,#eb58d9 100px,#ea58cb 250px,#e858bd 450px,#e858ac 700px,#ec5ea6 950px,#ee6aae 1150px,#f074b0 1300px,#f07aae 1450px,#f07696 1600px,#ee6a7d 1700px,#e86070 1800px)"></div>
<div style="position:absolute;left:0;top:1104px;width:1800px;height:8px;background:linear-gradient(90deg,#ed5ce5 0px,#ec58d9 100px,#ea58cb 250px,#e858bd 450px,#e858ac 700px,#ec5ea6 950px,#ee6aae 1150px,#f074b0 1300px,#f07aae 1450px,#f07696 1600px,#ee6a7d 1700px,#e86070 1800px)"></div>
<div style="position:absolute;left:0;top:1112px;width:1800px;height:8px;background:linear-gradient(90deg,#ee5de4 0px,#ec58d8 100px,#ea58ca 250px,#e858bc 450px,#e858ac 700px,#ec5ea6 950px,#ee6aae 1150px,#f074b0 1300px,#f07aae 1450px,#f07696 1600px,#ee6a7c 1700px,#e86070 1800px)"></div>
<svg width="1800" height="1120" style="left:0;top:0">
 <defs>
  <filter id="sb" x="-10%" y="-10%" width="120%" height="120%"><feGaussianBlur stdDeviation="1"/></filter>
  <filter id="sb2" x="-50%" y="-50%" width="200%" height="200%"><feGaussianBlur stdDeviation="1.6"/></filter>
  <linearGradient id="tlb" x1="0" y1="0" x2="0.35" y2="1"><stop offset="0" stop-color="#5c30f2"/><stop offset="0.3" stop-color="#6331f4" stop-opacity="1"/><stop offset="1" stop-color="#6231f2" stop-opacity="0"/></linearGradient>
 </defs>
 <path d="M-20,44 C5,38 45,37 90,48 C130,58 165,78 215,112 L215,230 L-20,230 Z" fill="url(#tlb)" filter="url(#sb2)"/>
 <path d="M1662,-2 C1688,32 1745,55 1802,76 L1802,-2 Z" fill="#4d1d5e" filter="url(#sb)"/>
</svg>
<div style="position:absolute;left:0;top:0;width:1800px;height:1120px;background:linear-gradient(108deg,rgba(236,90,104,0) 0,rgba(236,90,104,0) 92.8%,rgba(236,90,104,.6) 94.8%,#ec5a64 95.8%,#d85060 96.4%,#b04450 97%,#802e38 97.6%,#4a1a1e 98.4%,#2a1010 100%)"></div>
</div>
<div class="win"></div>
<div class="winclip">
 <div class="tb"></div>
 <div class="hd"></div>
 <div class="tl"></div>
</div>

<!-- title bar -->
<svg width="1800" height="140" style="left:0;top:0">
 <circle cx="127.5" cy="105.9" r="6.3" fill="#ec6159"/>
 <circle cx="147.4" cy="105.9" r="6.3" fill="#f1bb43"/>
 <circle cx="167.4" cy="105.9" r="6.3" fill="#52b95a"/>
 <rect x="200" y="98.6" width="18.4" height="14.6" rx="3" fill="none" stroke="#6b6a72" stroke-width="1.5"/>
 <line x1="206.8" y1="98.6" x2="206.8" y2="113.2" stroke="#6b6a72" stroke-width="1.5"/>
 <line x1="202" y1="102.2" x2="204.6" y2="102.2" stroke="#6b6a72" stroke-width="0.9"/>
 <line x1="202" y1="104.6" x2="204.6" y2="104.6" stroke="#6b6a72" stroke-width="0.9"/>
 <line x1="202" y1="107" x2="204.6" y2="107" stroke="#6b6a72" stroke-width="0.9"/>
 <line x1="226.8" y1="98" x2="226.8" y2="114" stroke="#e6dfe0" stroke-width="1"/>
 <polyline points="233.6,103.8 237,107.4 240.4,103.8" fill="none" stroke="#6b6a72" stroke-width="1.5" stroke-linecap="round" stroke-linejoin="round"/>
 <polyline points="274,98.8 266,105.6 274,112.4" fill="none" stroke="#5a5962" stroke-width="1.9" stroke-linecap="round" stroke-linejoin="round"/>
 <polyline points="302,98.8 310,105.6 302,112.4" fill="none" stroke="#b9b6bb" stroke-width="1.9" stroke-linecap="round" stroke-linejoin="round"/>
 <!-- shield -->
 <path d="M516.3,97.2 C513.5,98.6 511.6,99.2 509.8,99.6 L509.8,106.5 C509.8,110.4 512.6,112.6 516.3,114 C520,112.6 522.8,110.4 522.8,106.5 L522.8,99.6 C521,99.2 519.1,98.6 516.3,97.2 Z" fill="#fdfcfb" stroke="#7d7b82" stroke-width="1.6"/>
 <path d="M516.3,97.2 C513.5,98.6 511.6,99.2 509.8,99.6 L509.8,106.5 C509.8,110.4 512.6,112.6 516.3,114 Z" fill="#656377"/>
 <!-- 1password -->
 <path d="M561.5,110.8 A9.2,9.2 0 1 1 563.3,103.6" fill="none" stroke="#8b898e" stroke-width="1.5"/>
 <path d="M559.8,102.2 A6.3,6.3 0 1 0 556.6,111.2" fill="none" stroke="#6462f6" stroke-width="2.2"/>
 <line x1="553.9" y1="102.2" x2="553.9" y2="108.6" stroke="#58567a" stroke-width="2"/>
 <rect x="556.4" y="109.6" width="7.4" height="5.1" rx="1.2" fill="#2c2a3a"/>
 <path d="M558.1,110 L558.1,108.9 A1.9,1.9 0 0 1 561.9,108.9 L561.9,110" fill="none" stroke="#2c2a3a" stroke-width="1.5"/>
 <!-- share plus tabs -->
 <path d="M1593.3,100.8 L1591.6,100.8 Q1589.9,100.8 1589.9,102.5 L1589.9,112.3 Q1589.9,114 1591.6,114 L1601.6,114 Q1603.3,114 1603.3,112.3 L1603.3,102.5 Q1603.3,100.8 1601.6,100.8 L1599.8,100.8" fill="none" stroke="#7b7981" stroke-width="1.5"/>
 <line x1="1596.6" y1="95.2" x2="1596.6" y2="107.4" stroke="#7b7981" stroke-width="1.5"/>
 <polyline points="1593.8,98 1596.6,95.2 1599.4,98" fill="none" stroke="#7b7981" stroke-width="1.5" stroke-linecap="round" stroke-linejoin="round"/>
 <line x1="1626.6" y1="105.8" x2="1640" y2="105.8" stroke="#5d5b70" stroke-width="1.5"/>
 <line x1="1633.3" y1="99" x2="1633.3" y2="112.6" stroke="#5d5b70" stroke-width="1.5"/>
 <path d="M1666.6,109.3 L1665,109.3 Q1663.2,109.3 1663.2,107.5 L1663.2,98.8 Q1663.2,97 1665,97 L1673.2,97 Q1675,97 1675,98.8 L1675,100.8" fill="none" stroke="#7b7981" stroke-width="1.5"/>
 <rect x="1667.5" y="101.2" width="12" height="12.4" rx="2.2" fill="none" stroke="#7b7981" stroke-width="1.5"/>
</svg>
<div class="url"></div>
<svg width="20" height="20" style="left:0;top:0">
 <rect x="845.3" y="105.6" width="7.8" height="5.4" rx="1" fill="#9a98a0"/>
 <path d="M846.9,105.8 L846.9,104.5 A2.3,2.3 0 0 1 851.5,104.5 L851.5,105.8" fill="none" stroke="#9a98a0" stroke-width="1.3"/>
 <path d="M1216.3,103.6 A4.9,4.9 0 1 1 1212.6,101.5" fill="none" stroke="#8c8a90" stroke-width="1.2"/>
 <polyline points="1211.2,99.4 1213.6,101.5 1211.4,103.6" fill="none" stroke="#8c8a90" stroke-width="1.2"/>
</svg>
<div class="t" style="left:860.5px;top:100.2px;font-size:13.7px;line-height:13.7px;color:#4d4b55">app.atmos.style</div>

<!-- header -->
<svg width="40" height="40" style="left:0;top:0">
 <path d="M149.3,146.9 L166.8,180.8 L156.9,180.8 L144,156.5 Z" fill="#000"/>
 <path d="M137.5,169.2 L146.7,169.2 L140.4,180.8 L131,180.8 Z" fill="#000"/>
</svg>
<div class="t" style="left:183.4px;top:153px;font-size:18.5px;line-height:18.5px;letter-spacing:0.8px;-webkit-text-stroke:0.6px #64627c;color:#64627c">Home</div>
<svg width="10" height="10" style="left:0;top:0"><line x1="249.6" y1="154.2" x2="244.6" y2="171" stroke="#6a6884" stroke-width="2"/></svg>
<div class="t" style="left:259.2px;top:153px;font-size:18.5px;line-height:18.5px;letter-spacing:0.45px;-webkit-text-stroke:0.65px #1e1c2d;color:#1e1c2d">Atmos</div>

<div class="nav" style="left:595px;color:#4f4ae6">Overview</div>
<div style="position:absolute;left:595px;top:190px;width:71.5px;height:2px;background:#5550ea"></div>
<div class="nav" style="left:694.2px">Color generator</div>
<div class="nav" style="left:841.5px">Color wheel</div>
<div class="nav" style="left:959.4px">Shade generator</div>
<div class="nav" style="left:1113.6px;letter-spacing:-0.25px">Playground</div>

<svg width="30" height="10" style="left:0;top:0">
 <circle cx="1511.2" cy="162.2" r="2.1" fill="#5d5b70"/>
 <circle cx="1518.6" cy="162.2" r="2.1" fill="#5d5b70"/>
 <circle cx="1526" cy="162.2" r="2.1" fill="#5d5b70"/>
</svg>
<div style="position:absolute;left:1546.5px;top:144px;width:79px;height:36px;border-radius:7px;background:#4f49e6"></div>
<div class="t" style="left:1560.5px;top:155.6px;font-size:16px;line-height:16px;font-weight:700;color:#fff">Export</div>

<!-- toolbar -->
<div class="btn" style="left:129.5px;top:202px;width:72px;height:32px"></div>
<div class="btn" style="left:229.7px;top:202px;width:108.5px;height:32px"></div>
<div class="btn" style="left:366.2px;top:202px;width:92.5px;height:32px"></div>
<div class="btn" style="left:1606.2px;top:203.8px;width:65.8px;height:28.6px;border-radius:7px"></div>
<div style="position:absolute;left:1638.5px;top:203.8px;width:1px;height:28.6px;background:#ececf3"></div>
<svg width="10" height="10" style="left:0;top:0">
 <line x1="135.6" y1="218" x2="153.8" y2="218" stroke="#5a586e" stroke-width="2"/>
 <line x1="144.6" y1="209.2" x2="144.6" y2="226.8" stroke="#5a586e" stroke-width="2"/>
 <circle cx="245.6" cy="218" r="8" fill="none" stroke="#5a586e" stroke-width="2.1"/>
 <path d="M251.2,212.3 A8.1,8.1 0 0 1 239.8,223.7 Z" fill="#aaa8b8"/>
 <line x1="251.2" y1="212.3" x2="239.9" y2="223.6" stroke="#5a586e" stroke-width="2.2"/>
 <path d="M379.6,210.3 Q375.3,210.3 375.3,214 L375.3,222.6" fill="none" stroke="#5a586e" stroke-width="2" stroke-linecap="round"/>
 <path d="M388,210.3 Q392.3,210.3 392.3,214 L392.3,222.6" fill="none" stroke="#5a586e" stroke-width="2" stroke-linecap="round"/>
 <circle cx="378.8" cy="222.4" r="3.6" fill="none" stroke="#5a586e" stroke-width="2"/>
 <circle cx="388.8" cy="222.4" r="3.6" fill="none" stroke="#5a586e" stroke-width="2"/>
 <path d="M382.2,221 Q383.8,219.9 385.4,221" fill="none" stroke="#5a586e" stroke-width="1.8"/>
 <path d="M1620,210.4 L1614.6,216.2 L1620,222 M1614.6,216.2 L1626.2,216.2 Q1630.5,216.2 1630.5,220.5 L1630.5,226.4" fill="none" stroke="#a4a2b4" stroke-width="1.9" stroke-linecap="round" stroke-linejoin="round"/>
 <path d="M1657.8,210.4 L1663.2,216.2 L1657.8,222 M1663.2,216.2 L1652,216.2 Q1647.7,216.2 1647.7,220.5 L1647.7,226.4" fill="none" stroke="#a4a2b4" stroke-width="1.9" stroke-linecap="round" stroke-linejoin="round"/>
</svg>
<div class="btxt" style="left:163.8px;top:211.8px">Add</div>
<div class="btxt" style="left:264px;top:211.8px;letter-spacing:0.25px">Contrast</div>
<div class="btxt" style="left:403.6px;top:211.8px">Vision</div>

<!-- palette -->
<div class="cl" style="left:239.2px">900</div>
<div class="cl" style="left:317.8px">850</div>
<div class="cl" style="left:396.2px">800</div>
<div class="cl" style="left:474.8px">750</div>
<div class="cl" style="left:553.2px">700</div>
<div class="cl" style="left:631.8px">650</div>
<div class="cl" style="left:710.2px">600</div>
<div class="cl" style="left:788.8px">550</div>
<div class="cl" style="left:867.2px">500</div>
<div class="cl" style="left:945.8px">450</div>
<div class="cl" style="left:1024.2px">400</div>
<div class="cl" style="left:1102.8px">350</div>
<div class="cl" style="left:1181.2px">300</div>
<div class="cl" style="left:1259.8px">250</div>
<div class="cl" style="left:1338.2px">200</div>
<div class="cl" style="left:1416.8px">150</div>
<div class="cl" style="left:1495.2px">100</div>
<div class="cl" style="left:1573.8px">50</div>
<div class="rl" style="top:381.1px">Neutral</div>
<div class="rl" style="top:454.6px">Blue</div>
<div class="rl" style="top:528.1px">Deep orange</div>
<div class="rl" style="top:601.6px">Green</div>
<div class="rl" style="top:675.1px">Yellow</div>
<div class="rl" style="top:748.6px">Red</div>
<div class="grid">
<div class="c" style="left:0px;top:1px;width:78px;height:73px;background:#1f1d2b"></div>
<div class="c" style="left:78px;top:1px;width:79px;height:73px;background:#25243a"></div>
<div class="c" style="left:157px;top:1px;width:78px;height:73px;background:#302e3d"></div>
<div class="c" style="left:235px;top:1px;width:79px;height:73px;background:#3d3a4d"></div>
<div class="c" style="left:314px;top:1px;width:78px;height:73px;background:#4a475c"></div>
<div class="c" style="left:392px;top:1px;width:79px;height:73px;background:#56526c"></div>
<div class="c" style="left:471px;top:1px;width:78px;height:73px;background:#625e78"></div>
<div class="c" style="left:549px;top:1px;width:79px;height:73px;background:#6d6a82"></div>
<div class="c" style="left:628px;top:1px;width:78px;height:73px;background:#78758c"></div>
<div class="c" style="left:706px;top:1px;width:79px;height:73px;background:#848197"></div>
<div class="c" style="left:785px;top:1px;width:78px;height:73px;background:#908ea1"></div>
<div class="c" style="left:863px;top:1px;width:79px;height:73px;background:#9d9bab"></div>
<div class="c" style="left:942px;top:1px;width:78px;height:73px;background:#aba9b8"></div>
<div class="c" style="left:1020px;top:1px;width:79px;height:73px;background:#b8b6c4"></div>
<div class="c" style="left:1099px;top:1px;width:78px;height:73px;background:#c6c4d1"></div>
<div class="c" style="left:1177px;top:1px;width:79px;height:73px;background:#d4d3dc"></div>
<div class="c" style="left:1256px;top:1px;width:78px;height:73px;background:#e2e1ea"></div>
<div class="c" style="left:1334px;top:1px;width:79px;height:73px;background:#f0effa"></div>
<div class="c" style="left:0px;top:74px;width:78px;height:74px;background:#221f38"></div>
<div class="c" style="left:78px;top:74px;width:79px;height:74px;background:#231f5e"></div>
<div class="c" style="left:157px;top:74px;width:78px;height:74px;background:#2b2878"></div>
<div class="c" style="left:235px;top:74px;width:79px;height:74px;background:#33308f"></div>
<div class="c" style="left:314px;top:74px;width:78px;height:74px;background:#3a38b0"></div>
<div class="c" style="left:392px;top:74px;width:79px;height:74px;background:#4042cc"></div>
<div class="c" style="left:471px;top:74px;width:78px;height:74px;background:#4b4ae8"></div>
<div class="c" style="left:549px;top:74px;width:79px;height:74px;background:#5b58f4"></div>
<div class="c" style="left:628px;top:74px;width:78px;height:74px;background:#6b64f6"></div>
<div class="c" style="left:706px;top:74px;width:79px;height:74px;background:#7673f8"></div>
<div class="c" style="left:785px;top:74px;width:78px;height:74px;background:#8582f8"></div>
<div class="c" style="left:863px;top:74px;width:79px;height:74px;background:#9592f7"></div>
<div class="c" style="left:942px;top:74px;width:78px;height:74px;background:#a7a3f8"></div>
<div class="c" style="left:1020px;top:74px;width:79px;height:74px;background:#b5b1f8"></div>
<div class="c" style="left:1099px;top:74px;width:78px;height:74px;background:#c4c1f9"></div>
<div class="c" style="left:1177px;top:74px;width:79px;height:74px;background:#d4d1fb"></div>
<div class="c" style="left:1256px;top:74px;width:78px;height:74px;background:#e3e1fc"></div>
<div class="c" style="left:1334px;top:74px;width:79px;height:74px;background:#f0effa"></div>
<div class="c" style="left:0px;top:148px;width:78px;height:74px;background:#2b1808"></div>
<div class="c" style="left:78px;top:148px;width:79px;height:74px;background:#3b1e0a"></div>
<div class="c" style="left:157px;top:148px;width:78px;height:74px;background:#4a240c"></div>
<div class="c" style="left:235px;top:148px;width:79px;height:74px;background:#5a2e0e"></div>
<div class="c" style="left:314px;top:148px;width:78px;height:74px;background:#6a3812"></div>
<div class="c" style="left:392px;top:148px;width:79px;height:74px;background:#7b4214"></div>
<div class="c" style="left:471px;top:148px;width:78px;height:74px;background:#8c4a18"></div>
<div class="c" style="left:549px;top:148px;width:79px;height:74px;background:#a0541c"></div>
<div class="c" style="left:628px;top:148px;width:78px;height:74px;background:#b45e20"></div>
<div class="c" style="left:706px;top:148px;width:79px;height:74px;background:#c56a24"></div>
<div class="c" style="left:785px;top:148px;width:78px;height:74px;background:#d77528"></div>
<div class="c" style="left:863px;top:148px;width:79px;height:74px;background:#e28232"></div>
<div class="c" style="left:942px;top:148px;width:78px;height:74px;background:#ee9244"></div>
<div class="c" style="left:1020px;top:148px;width:79px;height:74px;background:#f2a664"></div>
<div class="c" style="left:1099px;top:148px;width:78px;height:74px;background:#f4b887"></div>
<div class="c" style="left:1177px;top:148px;width:79px;height:74px;background:#f6c9a7"></div>
<div class="c" style="left:1256px;top:148px;width:78px;height:74px;background:#f9dcc6"></div>
<div class="c" style="left:1334px;top:148px;width:79px;height:74px;background:#fbeee2"></div>
<div class="c" style="left:0px;top:222px;width:78px;height:73px;background:#0a1f10"></div>
<div class="c" style="left:78px;top:222px;width:79px;height:73px;background:#0e2b16"></div>
<div class="c" style="left:157px;top:222px;width:78px;height:73px;background:#11351b"></div>
<div class="c" style="left:235px;top:222px;width:79px;height:73px;background:#184424"></div>
<div class="c" style="left:314px;top:222px;width:78px;height:73px;background:#1f502d"></div>
<div class="c" style="left:392px;top:222px;width:79px;height:73px;background:#245e35"></div>
<div class="c" style="left:471px;top:222px;width:78px;height:73px;background:#2b6a3d"></div>
<div class="c" style="left:549px;top:222px;width:79px;height:73px;background:#327a45"></div>
<div class="c" style="left:628px;top:222px;width:78px;height:73px;background:#38884c"></div>
<div class="c" style="left:706px;top:222px;width:79px;height:73px;background:#409555"></div>
<div class="c" style="left:785px;top:222px;width:78px;height:73px;background:#48a25e"></div>
<div class="c" style="left:863px;top:222px;width:79px;height:73px;background:#4eb066"></div>
<div class="c" style="left:942px;top:222px;width:78px;height:73px;background:#55bf6d"></div>
<div class="c" style="left:1020px;top:222px;width:79px;height:73px;background:#5dcb75"></div>
<div class="c" style="left:1099px;top:222px;width:78px;height:73px;background:#64da7b"></div>
<div class="c" style="left:1177px;top:222px;width:79px;height:73px;background:#72ec8e"></div>
<div class="c" style="left:1256px;top:222px;width:78px;height:73px;background:#9cf5a8"></div>
<div class="c" style="left:1334px;top:222px;width:79px;height:73px;background:#e8f1e8"></div>
<div class="c" style="left:0px;top:295px;width:78px;height:74px;background:#2a1808"></div>
<div class="c" style="left:78px;top:295px;width:79px;height:74px;background:#3a2008"></div>
<div class="c" style="left:157px;top:295px;width:78px;height:74px;background:#4a260c"></div>
<div class="c" style="left:235px;top:295px;width:79px;height:74px;background:#5a2e0e"></div>
<div class="c" style="left:314px;top:295px;width:78px;height:74px;background:#6b3812"></div>
<div class="c" style="left:392px;top:295px;width:79px;height:74px;background:#7b4212"></div>
<div class="c" style="left:471px;top:295px;width:78px;height:74px;background:#885014"></div>
<div class="c" style="left:549px;top:295px;width:79px;height:74px;background:#965e18"></div>
<div class="c" style="left:628px;top:295px;width:78px;height:74px;background:#a46c1c"></div>
<div class="c" style="left:706px;top:295px;width:79px;height:74px;background:#b07820"></div>
<div class="c" style="left:785px;top:295px;width:78px;height:74px;background:#bc8424"></div>
<div class="c" style="left:863px;top:295px;width:79px;height:74px;background:#c89028"></div>
<div class="c" style="left:942px;top:295px;width:78px;height:74px;background:#d4a02e"></div>
<div class="c" style="left:1020px;top:295px;width:79px;height:74px;background:#e0ac32"></div>
<div class="c" style="left:1099px;top:295px;width:78px;height:74px;background:#f0bc38"></div>
<div class="c" style="left:1177px;top:295px;width:79px;height:74px;background:#f8cc58"></div>
<div class="c" style="left:1256px;top:295px;width:78px;height:74px;background:#f9dc98"></div>
<div class="c" style="left:1334px;top:295px;width:79px;height:74px;background:#fbefdf"></div>
<div class="c" style="left:0px;top:369px;width:78px;height:73px;background:#3b0a04"></div>
<div class="c" style="left:78px;top:369px;width:79px;height:73px;background:#4d0e0e"></div>
<div class="c" style="left:157px;top:369px;width:78px;height:73px;background:#5c1418"></div>
<div class="c" style="left:235px;top:369px;width:79px;height:73px;background:#6f1820"></div>
<div class="c" style="left:314px;top:369px;width:78px;height:73px;background:#871d25"></div>
<div class="c" style="left:392px;top:369px;width:79px;height:73px;background:#9a2128"></div>
<div class="c" style="left:471px;top:369px;width:78px;height:73px;background:#b0272f"></div>
<div class="c" style="left:549px;top:369px;width:79px;height:73px;background:#c32d34"></div>
<div class="c" style="left:628px;top:369px;width:78px;height:73px;background:#d6393b"></div>
<div class="c" style="left:706px;top:369px;width:79px;height:73px;background:#e44a46"></div>
<div class="c" style="left:785px;top:369px;width:78px;height:73px;background:#ed5e56"></div>
<div class="c" style="left:863px;top:369px;width:79px;height:73px;background:#ef786c"></div>
<div class="c" style="left:942px;top:369px;width:78px;height:73px;background:#f28f82"></div>
<div class="c" style="left:1020px;top:369px;width:79px;height:73px;background:#f3a49a"></div>
<div class="c" style="left:1099px;top:369px;width:78px;height:73px;background:#f4b7ae"></div>
<div class="c" style="left:1177px;top:369px;width:79px;height:73px;background:#f5c8c1"></div>
<div class="c" style="left:1256px;top:369px;width:78px;height:73px;background:#f7dad5"></div>
<div class="c" style="left:1334px;top:369px;width:79px;height:73px;background:#faece9"></div>
<div class="c" style="left:77px;top:1px;width:2px;height:73px;background:#383646"></div>
<div class="c" style="left:0;top:369px;width:78px;height:1px;background:#6a4646"></div>
<div class="c" style="left:77px;top:369px;width:2px;height:73px;background:#5a3412"></div>
</div>

<div class="ring"></div>
<!-- help -->
<div style="position:absolute;left:1635.5px;top:975.2px;width:46px;height:46px;border-radius:50%;background:#1e1c2c;box-shadow:0 3px 8px rgba(40,40,80,.18)"></div>
<svg width="10" height="10" style="left:0;top:0">
 <path d="M1653.6,993.6 Q1653.6,990.4 1657.9,990.4 Q1662.4,990.4 1662.4,994 Q1662.4,996.2 1659.8,997.4 Q1658,998.3 1658,1000.6" fill="none" stroke="#cfcdd6" stroke-width="2" stroke-linecap="round"/>
 <circle cx="1658" cy="1004.3" r="1.2" fill="#cfcdd6"/>
</svg>
</body></html>
